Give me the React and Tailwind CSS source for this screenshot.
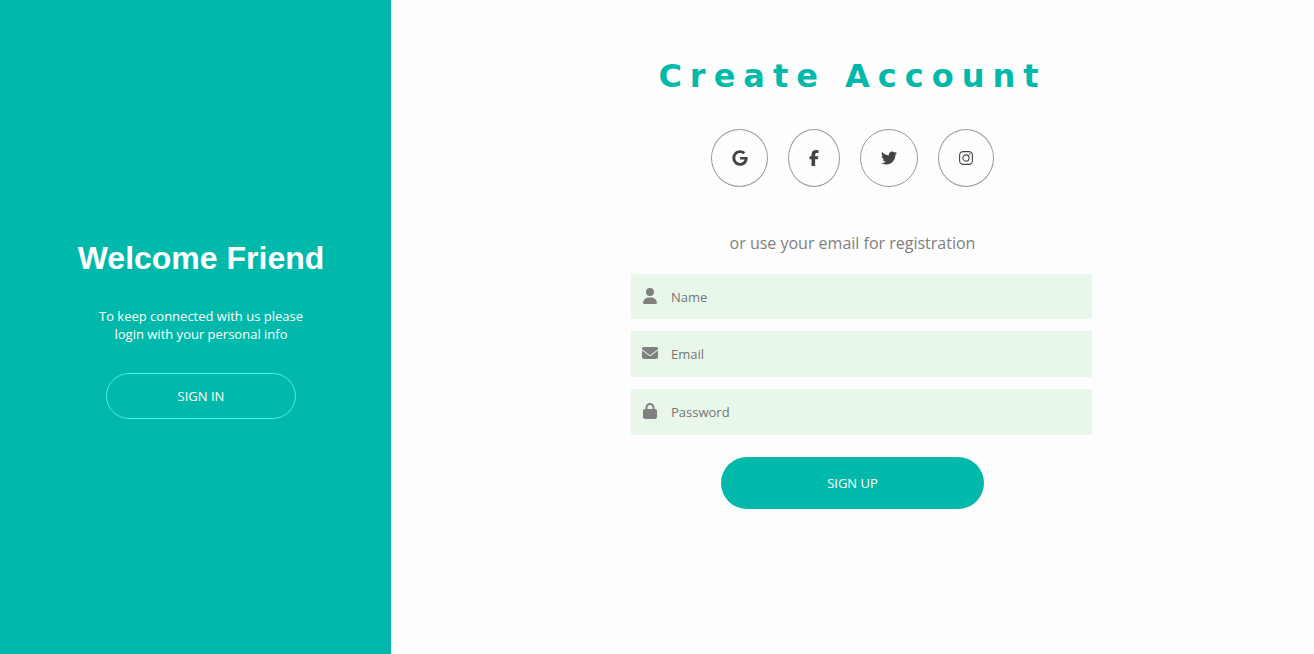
import { FaFacebookF, FaTwitter, FaUser, FaEnvelope, FaLock } from "react-icons/fa6";
import { FaGoogle } from "react-icons/fa6";

function InstagramIcon() {
  return (
    <svg width="16" height="16" viewBox="0 0 16 16" fill="none" stroke="currentColor" strokeWidth="1.1" aria-hidden="true">
      <rect x="1.6" y="1.6" width="12.8" height="12.8" rx="3.6" />
      <circle cx="8" cy="8" r="3.1" />
      <circle cx="11.8" cy="4.2" r="0.7" fill="currentColor" stroke="none" />
    </svg>
  );
}

const socials = [
  { label: "Google", Icon: FaGoogle, size: "w-[57px]" },
  { label: "Facebook", Icon: FaFacebookF, size: "w-[52px]" },
  { label: "Twitter", Icon: FaTwitter, size: "w-[58px]" },
  { label: "Instagram", Icon: InstagramIcon, size: "w-14" },
];

const fields = [
  { id: "name", label: "Name", type: "text", Icon: FaUser, height: "h-[45px]" },
  { id: "email", label: "Email", type: "email", Icon: FaEnvelope, height: "h-[46px]" },
  { id: "password", label: "Password", type: "password", Icon: FaLock, height: "h-[46px]" },
];

export default function App() {
  return (
    <div className="flex min-h-screen bg-[#fdfdfd] font-['Open_Sans',sans-serif]">
      <aside className="flex w-[391px] shrink-0 flex-col items-center bg-[#00b9aa] pt-[239px] pl-[11px] text-white">
        <h1 className="font-['Liberation_Sans',sans-serif] text-[32px] leading-[38px] font-bold">Welcome Friend</h1>
        <p className="mt-[30px] text-center text-[13px] leading-[18px]">
          To keep connected with us please
          <br />
          login with your personal info
        </p>
        <button type="button" className="mt-[30px] h-[46px] w-[190px] rounded-full border border-[#4deee1] pt-px text-[13px]">
          SIGN IN
        </button>
      </aside>
      <main className="flex flex-1 flex-col items-center pt-14">
        <h2 className="font-['DejaVu_Sans',sans-serif] text-[32px] leading-10 font-bold tracking-[8px] text-[#00b9aa]">
          Create Account
        </h2>
        <div className="mt-[33px] flex gap-5">
          {socials.map(({ label, Icon, size }) => (
            <a
              key={label}
              href="#"
              aria-label={label}
              className={`flex h-[58px] items-center justify-center rounded-[50%] border border-[#999] text-base text-[#444] ${size}`}
            >
              <Icon />
            </a>
          ))}
        </div>
        <form className="flex flex-col items-center" onSubmit={(e) => e.preventDefault()}>
          <p className="mt-11 mb-[19px] text-base leading-6 text-[#808080]">or use your email for registration</p>
          <div className="flex flex-col gap-3 pl-[18px]">
            {fields.map(({ id, label, type, Icon, height }) => (
              <div key={id} className={`flex w-[461px] items-center bg-[#e9f7eb] pl-[11px] ${height}`}>
                <label htmlFor={id} aria-label={label} className="flex w-4 justify-center pb-0.5 text-base text-[#808080]">
                  <Icon />
                </label>
                <input
                  id={id}
                  type={type}
                  placeholder={label}
                  className="ml-[13px] h-full flex-1 bg-transparent text-[13px] text-[#757575] outline-none placeholder:text-[#757575]"
                />
              </div>
            ))}
          </div>
          <button type="submit" className="mt-[22px] h-[52px] w-[263px] rounded-full bg-[#00b9aa] pt-px text-[13px] text-white">
            SIGN UP
          </button>
        </form>
      </main>
    </div>
  );
}
